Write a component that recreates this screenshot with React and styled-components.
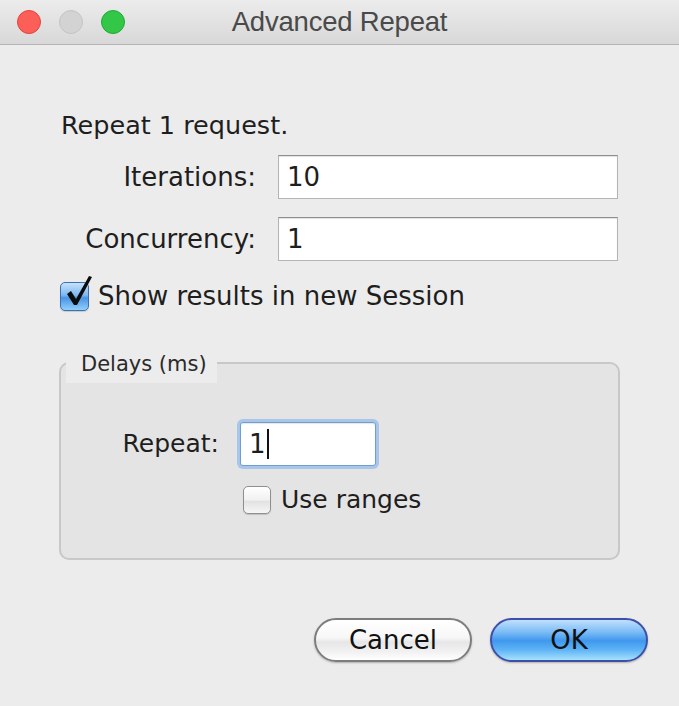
import React from "react";
import styled, { createGlobalStyle } from "styled-components";

const Global = createGlobalStyle`
  html, body { margin: 0; padding: 0; background: #ececec; }
  body { font-family: "DejaVu Sans", "Liberation Sans", sans-serif; color: #1e1e1e; }
  * { box-sizing: border-box; }
`;

const Window = styled.div`
  width: 679px;
  height: 706px;
  background: #ececec;
  display: flex;
  flex-direction: column;
  overflow: hidden;
`;

const TitleBar = styled.div`
  height: 45px;
  flex: none;
  display: grid;
  grid-template-columns: 1fr auto 1fr;
  align-items: center;
  background: linear-gradient(#ececec, #d8d8d8);
  border-bottom: 1px solid #b5b5b5;
`;

const Lights = styled.div`
  display: flex;
  gap: 18px;
  padding-left: 17px;
`;

const Light = styled.span`
  width: 24px;
  height: 24px;
  border-radius: 50%;
  background: ${(p) => p.$bg};
  border: 1px solid ${(p) => p.$edge};
`;

const Title = styled.div`
  font-family: "Liberation Sans", "Roboto", sans-serif;
  font-size: 27.5px;
  color: #4a4a4a;
  line-height: 30px;
  letter-spacing: -0.2px;
`;

const Content = styled.div`
  padding: 65px 59px 0 59px;
  display: flex;
  flex-direction: column;
`;

const Intro = styled.div`
  font-size: 25.5px;
  line-height: 30px;
  margin-left: 2px;
`;

const FormGrid = styled.div`
  display: grid;
  grid-template-columns: ${(p) => p.$cols};
  column-gap: ${(p) => p.$gap}px;
  row-gap: 18px;
  align-items: center;
  margin-top: ${(p) => p.$top}px;
`;

const Label = styled.label`
  font-size: ${(p) => p.$size || 26}px;
  line-height: 30px;
  text-align: right;
  white-space: nowrap;
`;

const Field = styled.div`
  height: 44px;
  background: #fff;
  border: 1px solid #b4b4b4;
  border-top-color: #8e8e8e;
  box-shadow: inset 0 1px 1px rgba(0, 0, 0, 0.12);
  font-size: 26px;
  line-height: 42px;
  padding-left: 8px;
  display: flex;
  align-items: center;
  ${(p) =>
    p.$focus &&
    `
    border: 1px solid #6f9dd6;
    border-radius: 3px;
    box-shadow: 0 0 0 3px #a8c6ea, inset 0 1px 1px rgba(0,0,0,0.1);
  `}
`;

const Caret = styled.span`
  display: inline-block;
  width: 2px;
  height: 30px;
  background: #111;
  margin-left: 1px;
`;

const CheckRow = styled.div`
  display: flex;
  align-items: center;
  gap: ${(p) => p.$gap}px;
  margin-top: ${(p) => p.$top}px;
  margin-left: ${(p) => p.$left}px;
  font-size: ${(p) => p.$size || 26}px;
  line-height: 30px;
`;

const CheckBox = styled.span`
  position: relative;
  width: ${(p) => p.$box}px;
  height: ${(p) => p.$box}px;
  border-radius: 5px;
  flex: none;
  border: 1px solid ${(p) => (p.$checked ? "#3d6fb5" : "#8f8f8f")};
  background: ${(p) =>
    p.$checked
      ? "linear-gradient(#c6e2fb 0%, #7db8f1 45%, #4b93e5 55%, #8fd0fb 100%)"
      : "linear-gradient(#ffffff 0%, #f1f1f1 50%, #e2e2e2 55%, #f6f6f6 100%)"};
  box-shadow: 0 1px 1px rgba(0, 0, 0, 0.15);
`;

const CheckMark = styled.svg`
  position: absolute;
  left: 3px;
  top: -9px;
`;

const Group = styled.fieldset`
  margin: 32px 0 0 0;
  padding: 39px 0 43px 0;
  border: 2px solid #c8c8c8;
  border-radius: 10px;
  background: #e4e4e4;
  min-width: 0;
`;

const Legend = styled.legend`
  margin-left: 5px;
  padding: 8px 10px 5px 15px;
  background: #ececec;
  font-size: 21px;
  line-height: 27px;
  color: #2a2a2a;
`;

const Buttons = styled.div`
  display: flex;
  justify-content: flex-end;
  gap: 18px;
  margin-top: 58px;
  margin-right: -28px;
`;

const Button = styled.button`
  width: 158px;
  height: 44px;
  border-radius: 22px;
  font-family: "DejaVu Sans", sans-serif;
  font-size: 26px;
  color: #111;
  padding: 0;
  border: 2px solid ${(p) => (p.$primary ? "#3e4fa8" : "#7d7d7d")};
  background: ${(p) =>
    p.$primary
      ? "linear-gradient(#bfe0fd 0%, #7cbcf6 30%, #3f98ee 52%, #5fb4f6 75%, #a6e2fd 100%)"
      : "linear-gradient(#ffffff 0%, #f7f7f7 45%, #e6e6e6 55%, #f2f2f2 80%, #ffffff 100%)"};
  box-shadow: 0 1px 2px rgba(0, 0, 0, 0.25);
`;

export default function App() {
  return (
    <>
      <Global />
      <Window>
        <TitleBar>
          <Lights>
            <Light $bg="#fc5f57" $edge="#e0443e" />
            <Light $bg="#d3d3d3" $edge="#c4c4c4" />
            <Light $bg="#33c748" $edge="#22a836" />
          </Lights>
          <Title>Advanced Repeat</Title>
          <div />
        </TitleBar>
        <Content>
          <Intro>Repeat 1 request.</Intro>
          <FormGrid $cols="197px 340px" $gap={22} $top={15}>
            <Label>Iterations:</Label>
            <Field>10</Field>
            <Label>Concurrency:</Label>
            <Field>1</Field>
          </FormGrid>
          <CheckRow $gap={9} $top={20} $left={1}>
            <CheckBox $box={29} $checked>
              <CheckMark width="30" height="34" viewBox="0 0 30 34">
                <path
                  d="M3 20 L7 17 L12 25 L25 2 L28 3 L13 31 L10 31 Z"
                  fill="#0c0c0c"
                />
              </CheckMark>
            </CheckBox>
            <span>Show results in new Session</span>
          </CheckRow>
          <Group>
            <Legend>Delays (ms)</Legend>
            <FormGrid $cols="158px 136px" $gap={21} $top={0}>
              <Label $size={25}>Repeat:</Label>
              <Field $focus>
                1<Caret />
              </Field>
            </FormGrid>
            <CheckRow $gap={10} $top={19} $left={182} $size={25}>
              <CheckBox $box={28} />
              <span>Use ranges</span>
            </CheckRow>
          </Group>
          <Buttons>
            <Button>Cancel</Button>
            <Button $primary>OK</Button>
          </Buttons>
        </Content>
      </Window>
    </>
  );
}
